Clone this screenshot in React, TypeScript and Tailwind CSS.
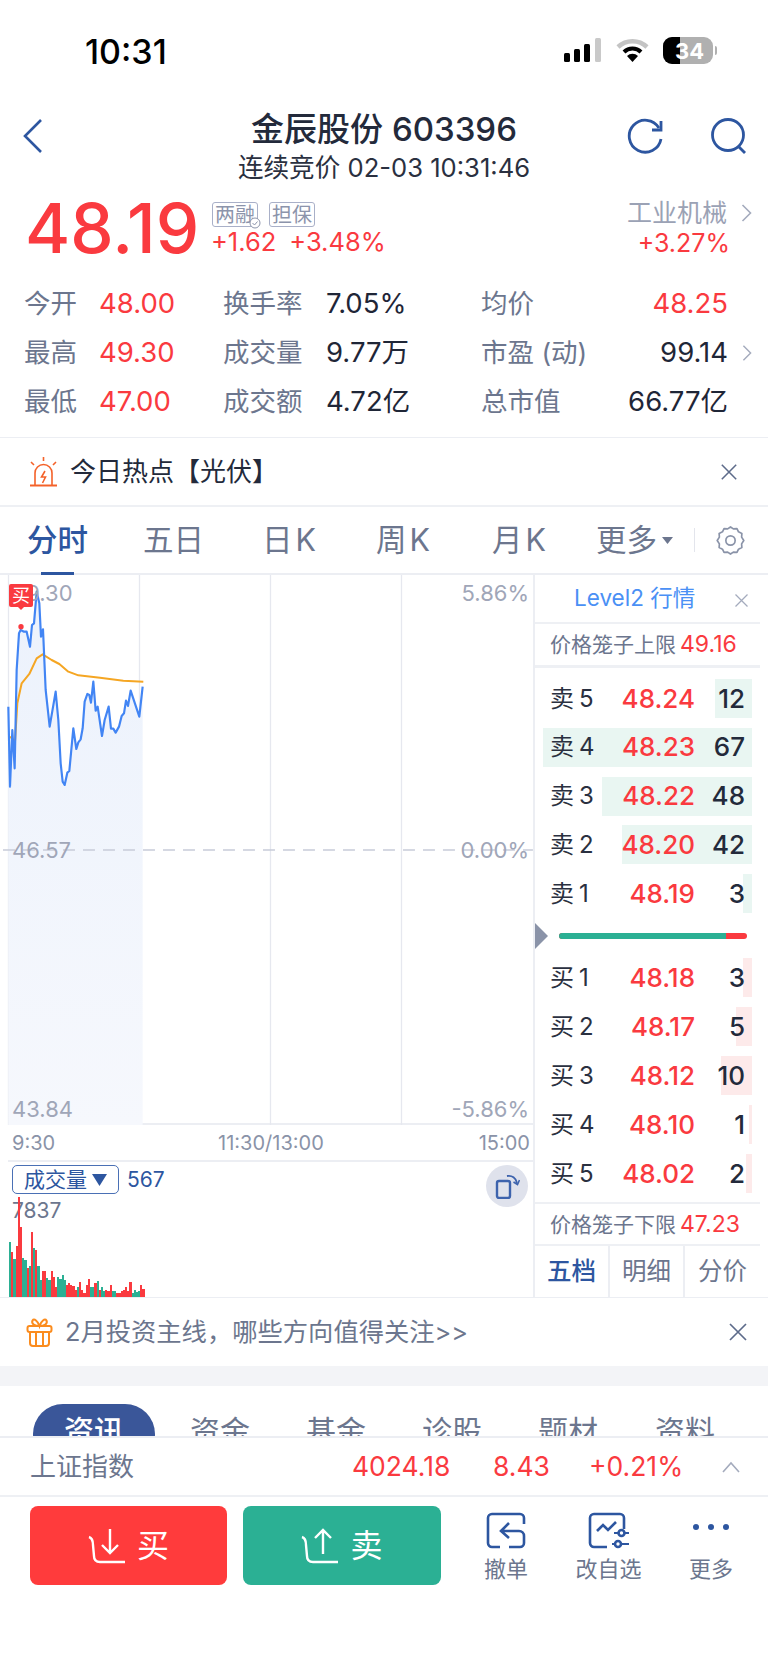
import React from 'react';

const FONT = '"Inter", "Noto Sans CJK SC", sans-serif';

const BLUE_PTS = '25,410 30,650 37,480 44,595 50,300 57,190 62,180 72,185 80,185 90,230 96,165 102,160 110,65 118,100 123,200 129,178 137,360 149,470 167,365 175,450 182,580 188,635 194,645 202,608 208,603 220,475 229,537 235,517 242,508 248,475 254,395 262,372 268,375 273,398 280,335 287,422 293,410 306,498 314,450 326,410 333,476 340,476 347,488 357,470 365,438 372,430 378,392 384,408 392,362 418,440 428,350';
const ORANGE_PTS = '30,500 45,515 52,400 65,340 88,312 110,265 128,253 155,270 178,282 205,305 235,316 300,323 370,332 430,335';

const VOL: [number, number][] = [[55,0],[45,1],[38,0],[51,1],[100,1],[70,1],[39,0],[37,0],[29,1],[31,0],[65,1],[49,0],[47,1],[31,0],[17,0],[26,1],[26,1],[19,0],[17,0],[26,1],[20,1],[10,1],[20,0],[18,0],[22,0],[17,0],[12,1],[14,1],[12,1],[11,1],[7,1],[10,0],[15,1],[7,1],[4,1],[12,1],[18,1],[10,0],[10,0],[14,1],[16,0],[7,1],[10,0],[6,0],[7,1],[6,1],[12,1],[6,0],[6,0],[4,1],[4,1],[6,1],[7,1],[10,1],[6,1],[15,1],[4,0],[7,0],[5,0],[6,0],[12,1],[8,1]];

const SELL = [
  ['卖', '5', '48.24', '12', 37],
  ['卖', '4', '48.23', '67', 209],
  ['卖', '3', '48.22', '48', 150],
  ['卖', '2', '48.20', '42', 130],
  ['卖', '1', '48.19', '3', 9],
] as const;
const BUY = [
  ['买', '1', '48.18', '3', 9],
  ['买', '2', '48.17', '5', 16],
  ['买', '3', '48.12', '10', 31],
  ['买', '4', '48.10', '1', 3],
  ['买', '5', '48.02', '2', 6],
] as const;

function Chevron({ className }: { className: string }) {
  return (
    <svg className={className} width="11" height="20" viewBox="0 0 11 20" fill="none" stroke="#a4abbd" strokeWidth="1.6">
      <path d="M1.5 2 L9.5 10 L1.5 18" />
    </svg>
  );
}

function Close({ size, color }: { size: number; color: string }) {
  return (
    <svg width={size} height={size} viewBox="0 0 20 20" fill="none" stroke={color} strokeWidth="1.7">
      <path d="M2 2 L18 18 M18 2 L2 18" />
    </svg>
  );
}

function Stat({ label, value, red, w, vw }: { label: string; value: string; red?: boolean; w: string; vw?: string }) {
  return (
    <div className={`flex items-center ${w}`}>
      <span className={`text-[26.5px] leading-none whitespace-nowrap text-[#6c768e] ${vw}`}>{label}</span>
      <span className={`text-[27.5px] leading-none whitespace-nowrap ${red ? 'text-[#fa3a3f]' : 'text-[#1f2637]'}`}>{value}</span>
    </div>
  );
}

function BookRow({ row, buy }: { row: readonly [string, string, string, string, number]; buy?: boolean }) {
  return (
    <div className="relative flex h-[39px] items-center pl-[15px] pr-[15px]">
      <div
        className={`absolute right-[8px] top-0 h-full ${buy ? 'bg-[#fdeaea]' : 'bg-[#e9f6f2]'}`}
        style={{ width: row[4] }}
      />
      <span className="relative flex w-[60px] items-center text-[24px] leading-none text-[#2a3040]">
        {row[0]}
        <span className="ml-[5px]">{row[1]}</span>
      </span>
      <span className="relative w-[85px] text-right text-[26px] font-medium leading-none text-[#fa3a3f]">{row[2]}</span>
      <span className="relative flex-1 text-right text-[26px] font-medium leading-none text-[#232a3b]">{row[3]}</span>
    </div>
  );
}

function ActionIcon({ label, children, w }: { label: string; children: React.ReactNode; w: string }) {
  return (
    <div className={`flex flex-col items-center ${w}`}>
      <div className="mt-[3px] flex h-[42px] items-center justify-center">{children}</div>
      <span className="mt-[4px] text-[22px] leading-[28px] text-[#6c768e]">{label}</span>
    </div>
  );
}

export default function App() {
  return (
    <div className="h-[1663px] w-[768px] overflow-hidden bg-white" style={{ fontFamily: FONT }}>
      {/* status bar */}
      <div className="flex h-[104px] items-start justify-between pl-[85px] pr-[51px] pt-[33px]">
        <span className="text-[34px] font-medium leading-[38px] text-black">10:31</span>
        <div className="flex items-center pt-[4px]">
          <svg width="38" height="25" viewBox="0 0 38 25">
            <rect x="0" y="15" width="6" height="9" rx="1.5" fill="#000" />
            <rect x="10" y="11" width="6" height="13" rx="1.5" fill="#000" />
            <rect x="20" y="6" width="6" height="18" rx="1.5" fill="#000" />
            <rect x="31" y="0" width="6" height="24" rx="1.5" fill="#c9c9c9" />
          </svg>
          <svg className="ml-[14px]" width="33" height="25" viewBox="0 0 33 25" fill="none">
            <path d="M2 9 A21 21 0 0 1 31 9" stroke="#c4c4c4" strokeWidth="4.5" />
            <path d="M8 14 A12 12 0 0 1 25 14" stroke="#000" strokeWidth="4" />
            <path d="M16.5 24 L11 18 A8 8 0 0 1 22 18 Z" fill="#000" />
          </svg>
          <div className="ml-[14px] flex h-[27px] w-[50px] overflow-hidden rounded-[9px] bg-[#b0b0b0]">
            <div className="h-full w-[17px] bg-black" />
          </div>
          <span className="-ml-[45px] mr-[2px] w-[43px] text-center text-[22px] font-bold leading-none text-white">34</span>
          <div className="ml-[2px] h-[9px] w-[2px] rounded-r bg-[#b0b0b0]" />
        </div>
      </div>

      {/* header */}
      <div className="flex h-[76px] items-start pl-[23px] pr-[21px]">
        <svg className="mt-[14px]" width="20" height="36" viewBox="0 0 20 36" fill="none" stroke="#2d56a0" strokeWidth="2.6">
          <path d="M18 2 L2 18 L18 34" />
        </svg>
        <div className="flex flex-1 flex-col items-center pl-[98px]">
          <div className="whitespace-nowrap text-[33px] font-medium leading-[50px] text-[#232a3b]">金辰股份 603396</div>
          <div className="-mt-[1px] whitespace-nowrap text-[25.6px] leading-[30px] text-[#2a3040]">连续竞价 02-03 10:31:46</div>
        </div>
        <svg className="mt-[13px]" width="37" height="37" viewBox="0 0 37 37" fill="none" stroke="#2d56a0" strokeWidth="2.8">
          <path d="M32 11 A16 16 0 1 0 34 22" />
          <path d="M34 4 L34 13 L25 13" />
        </svg>
        <svg className="ml-[46px] mt-[13px]" width="37" height="37" viewBox="0 0 37 37" fill="none" stroke="#2d56a0" strokeWidth="2.8">
          <circle cx="18" cy="18" r="15.5" />
          <path d="M28 29 L35 36" />
        </svg>
      </div>

      {/* price */}
      <div className="flex h-[86px] items-start pl-[25px] pr-[16px] pt-[22px]">
        <span className="w-[186px] text-[69px] font-medium leading-[52px] text-[#fa3a3f]">48.19</span>
        <div className="flex flex-col">
          <div className="ml-[1px] flex gap-[11px]">
            <div className="relative flex h-[25px] w-[46px] items-center justify-center rounded-[3px] border border-[#a9b0c8] text-[20px] leading-none text-[#8c94ab]">
              两融
              <svg className="absolute -bottom-[3px] -right-[4px]" width="12" height="12" viewBox="0 0 12 12" fill="#fff" stroke="#8c94ab">
                <circle cx="6" cy="6" r="5" />
                <path d="M3.5 6 L5.5 8 L8.5 4.5" fill="none" />
              </svg>
            </div>
            <div className="flex h-[25px] w-[46px] items-center justify-center rounded-[3px] border border-[#a9b0c8] text-[20px] leading-none text-[#8c94ab]">
              担保
            </div>
          </div>
          <div className="flex items-center gap-[13px] text-[25.5px] leading-[30px] text-[#fa3a3f]">
            <span>+1.62</span>
            <span>+3.48%</span>
          </div>
        </div>
        <div className="-mt-[2px] ml-auto flex flex-col items-end">
          <div className="flex items-center">
            <span className="text-[25px] leading-[26px] text-[#9ba2b5]">工业机械</span>
            <Chevron className="ml-[14px]" />
          </div>
          <span className="mr-[22px] mt-[2px] text-[25px] leading-[30px] text-[#fa3a3f]">+3.27%</span>
        </div>
      </div>

      {/* stats */}
      <div className="flex h-[172px] flex-col border-b border-[#eceef3] pl-[24px] pt-[13px]">
        <div className="flex h-[49px] items-center">
          <Stat label="今开" value="48.00" red w="w-[199px]" vw="w-[75px]" />
          <Stat label="换手率" value="7.05%" w="w-[258px]" vw="w-[103px]" />
          <span className="w-[100px] whitespace-nowrap text-[26.5px] leading-none text-[#6c768e]">均价</span>
          <span className="w-[147px] text-right text-[27.5px] leading-none text-[#fa3a3f]">48.25</span>
        </div>
        <div className="flex h-[49px] items-center">
          <Stat label="最高" value="49.30" red w="w-[199px]" vw="w-[75px]" />
          <Stat label="成交量" value="9.77万" w="w-[258px]" vw="w-[103px]" />
          <span className="w-[100px] whitespace-nowrap text-[26.5px] leading-none text-[#6c768e]">市盈 (动)</span>
          <span className="w-[147px] text-right text-[27.5px] leading-none text-[#1f2637]">99.14</span>
          <Chevron className="ml-[14px] h-[18px] w-[10px]" />
        </div>
        <div className="flex h-[49px] items-center">
          <Stat label="最低" value="47.00" red w="w-[199px]" vw="w-[75px]" />
          <Stat label="成交额" value="4.72亿" w="w-[258px]" vw="w-[103px]" />
          <span className="w-[100px] whitespace-nowrap text-[26.5px] leading-none text-[#6c768e]">总市值</span>
          <span className="w-[147px] whitespace-nowrap text-right text-[27.5px] leading-none text-[#1f2637]">66.77亿</span>
        </div>
      </div>

      {/* hot */}
      <div className="flex h-[69px] items-center border-b-2 border-[#eef0f4] pl-[29px] pr-[30px]">
        <svg width="29" height="31" viewBox="0 0 29 31" fill="none" stroke="#f4622a" strokeWidth="1.6">
          <path d="M6 29 L6 17 A8.5 8.5 0 0 1 23 17 L23 29" />
          <path d="M1 29.5 L28 29.5" strokeWidth="2" />
          <path d="M14.5 1 L14.5 5 M2 6 L5 9 M27 6 L24 9" />
          <path d="M16 15 L12.5 21 L16.5 21 L13.5 27" />
        </svg>
        <span className="ml-[12px] text-[26px] leading-none text-[#232a3b]">今日热点【光伏】</span>
        <div className="ml-auto">
          <Close size={18} color="#5d6b8a" />
        </div>
      </div>

      {/* period tabs */}
      <div className="relative flex h-[68px] items-center whitespace-nowrap border-b-2 border-[#eceef3] text-[30.5px] leading-none text-[#6c768e]">
        <span className="ml-[27px] w-[61px] font-medium text-[#2d56a0]">分时</span>
        <span className="ml-[55px] w-[61px]">五日</span>
        <span className="ml-[58px] w-[54px]">日<span className="ml-[3px]">K</span></span>
        <span className="ml-[60px] w-[54px]">周<span className="ml-[3px]">K</span></span>
        <span className="ml-[62px] w-[54px]">月<span className="ml-[3px]">K</span></span>
        <span className="ml-[50px] w-[61px]">更多</span>
        <svg className="ml-[5px]" width="11" height="7" viewBox="0 0 11 7" fill="#6c768e">
          <path d="M0 0 H11 L5.5 7 Z" />
        </svg>
        <div className="ml-[21px] h-[24px] w-px bg-[#e3e5ec]" />
        <svg className="ml-[20px]" width="31" height="31" viewBox="0 0 24 24" fill="none" stroke="#8a93a8" strokeWidth="1.3" strokeLinejoin="round">
          <path d="M12 1.5 L14.2 3 L17 2.8 L18.2 5.3 L20.8 6.5 L20.6 9.4 L22.3 12 L20.6 14.6 L20.8 17.5 L18.2 18.7 L17 21.2 L14.2 21 L12 22.5 L9.8 21 L7 21.2 L5.8 18.7 L3.2 17.5 L3.4 14.6 L1.7 12 L3.4 9.4 L3.2 6.5 L5.8 5.3 L7 2.8 L9.8 3 Z" />
          <circle cx="12" cy="12" r="3.6" />
        </svg>
        <div className="absolute bottom-[-2px] left-[41px] h-[3px] w-[33px] bg-[#2d56a0]" />
      </div>

      {/* chart + book */}
      <div className="flex h-[723px] border-b border-[#eceef3] pr-[8px]">
        <div className="flex w-[533px] flex-col pl-[8px]">
          <div className="relative h-[550px] border-b-2 border-[#eceef3] text-[22px] leading-none text-[#a0a6b8]">
            <svg className="absolute left-[-8px] top-0" width="533" height="550" viewBox="0 0 533 550" fill="none">
              <defs>
                <linearGradient id="area" x1="0" y1="0" x2="0" y2="1">
                  <stop offset="0" stopColor="#ecf2fc" />
                  <stop offset="1" stopColor="#f6f8fd" />
                </linearGradient>
              </defs>
              <g stroke="#e6e8ef" strokeWidth="1.3">
                <path d="M8.5 0 V550 M139.5 0 V550 M270.5 0 V550 M401.5 0 V550" />
              </g>
              <g transform="translate(0,-5) scale(0.3333)">
                <polygon points={`${BLUE_PTS} 428,1665 25,1665`} fill="url(#area)" />
                <path d="M 9 840 H 1599" stroke="#c8ccd9" strokeWidth="4" strokeDasharray="36 24" />
                <polyline points={ORANGE_PTS} stroke="#f5a623" strokeWidth="6" strokeLinejoin="round" />
                <polyline points={BLUE_PTS} stroke="#4285f4" strokeWidth="6.5" strokeLinejoin="round" />
                <circle cx="63" cy="170" r="8" fill="#fa3a3f" />
              </g>
            </svg>
            <span className="absolute left-[4px] top-[7px]">49.30</span>
            <span className="absolute right-[4px] top-[7px]">5.86%</span>
            <span className="absolute left-[4px] top-[264px]">46.57</span>
            <span className="absolute right-[4px] top-[264px]">0.00%</span>
            <span className="absolute bottom-[3px] left-[4px]">43.84</span>
            <span className="absolute bottom-[3px] right-[4px]">-5.86%</span>
            <div className="absolute left-[1px] top-[9px] flex h-[23px] w-[24px] items-center justify-center rounded-[2px] bg-[#fa3a3f] text-[18px] leading-none text-white">
              买
            </div>
            <div className="absolute left-[10px] top-[32px] h-0 w-0 border-x-[3px] border-t-[3px] border-x-transparent border-t-[#fa3a3f]" />
          </div>
          <div className="flex h-[37px] items-center justify-between border-b-2 border-[#eceef3] pl-[4px] pr-[3px] text-[20px] leading-none text-[#8a93a8]">
            <span>9:30</span>
            <span className="ml-[8px]">11:30/13:00</span>
            <span>15:00</span>
          </div>
          <div className="relative flex-1 overflow-hidden">
            <div className="ml-[4px] mt-[3px] flex items-center">
              <div className="flex h-[29px] w-[107px] items-center justify-center gap-[5px] rounded-[5px] border border-[#4a70b5] text-[21px] leading-none text-[#2d56a0]">
                成交量
                <svg width="15" height="12" viewBox="0 0 15 12" fill="#2d56a0">
                  <path d="M0 0 H15 L7.5 12 Z" />
                </svg>
              </div>
              <span className="ml-[8px] text-[21px] leading-none text-[#2d56a0]">567</span>
            </div>
            <div className="ml-[4px] mt-[5px] text-[21px] leading-[24px] text-[#6c768e]">7837</div>
            <div className="absolute bottom-0 left-[1px] flex items-end">
              {VOL.map((b, i) => (
                <div
                  key={i}
                  className={`w-[2.2px] ${b[1] ? 'bg-[#fa3a3f]' : 'bg-[#2bb094]'}`}
                  style={{ height: b[0] }}
                />
              ))}
            </div>
            <div className="absolute right-[5px] top-[3px] flex h-[42px] w-[42px] items-center justify-center rounded-full bg-[#dfe2ec]">
              <svg width="26" height="26" viewBox="0 0 26 26" fill="none" stroke="#3d63ad" strokeWidth="2.4">
                <rect x="3" y="8" width="13" height="17" rx="2" />
                <path d="M13 3 C18 2 22 5 23 10" strokeWidth="1.8" />
                <path d="M19.5 9 L23.5 11.5 L25.5 7" strokeWidth="1.6" />
              </svg>
            </div>
          </div>
        </div>

        <div className="flex flex-1 flex-col border-l-2 border-[#eceef3]">
          <div className="relative flex h-[49px] items-center border-b-2 border-[#eef0f4] pl-[39px] text-[22.5px] leading-none text-[#4a90f5]">
            Level2 行情
            <div className="absolute right-[11px] top-[18px]">
              <Close size={15} color="#a4abbd" />
            </div>
          </div>
          <div className="flex h-[44px] items-center border-b-[3px] border-[#eef0f4] pl-[15px] text-[21px] leading-none text-[#6c768e]">
            价格笼子上限<span className="ml-[4px] text-[23px] text-[#fa3a3f]">49.16</span>
          </div>
          <div className="flex flex-col gap-[9.75px] pt-[11px]">
            {SELL.map((r) => (
              <BookRow key={r[0] + r[1]} row={r} />
            ))}
          </div>
          <div className="flex h-[45px] items-center">
            <svg width="13" height="26" viewBox="0 0 13 26" fill="#8a93a8">
              <path d="M0 0 L13 13 L0 26 Z" />
            </svg>
            <div className="ml-[11px] flex h-[6px] w-[188px] overflow-hidden rounded-full bg-[#fa3a3f]">
              <div className="h-full w-[167px] bg-[#2bb094]" />
            </div>
          </div>
          <div className="flex flex-col gap-[10px]">
            {BUY.map((r) => (
              <BookRow key={r[0] + r[1]} row={r} buy />
            ))}
          </div>
          <div className="mt-[9px] flex h-[44px] items-center border-y-2 border-[#eef0f4] pl-[15px] text-[21px] leading-none text-[#6c768e]">
            价格笼子下限<span className="ml-[4px] text-[23px] text-[#fa3a3f]">47.23</span>
          </div>
          <div className="flex flex-1 text-[24.5px] leading-none text-[#6c768e]">
            <div className="flex w-[75px] items-center justify-center border-r-2 border-[#eceef3] font-medium text-[#2d56a0]">五档</div>
            <div className="flex w-[75px] items-center justify-center border-r-2 border-[#eceef3]">明细</div>
            <div className="flex flex-1 items-center justify-center">分价</div>
          </div>
        </div>
      </div>

      {/* banner */}
      <div className="flex h-[68px] items-center pl-[26px] pr-[20px]">
        <svg width="27" height="29" viewBox="0 0 27 29" fill="none" stroke="#fb8c1e" strokeWidth="2">
          <rect x="1.5" y="8" width="24" height="6" rx="2" />
          <path d="M4 14 V25 A3 3 0 0 0 7 28 H20 A3 3 0 0 0 23 25 V14" />
          <path d="M10 14 V28 M17 14 V28" />
          <path d="M13.5 8 C9 8 5 6 6.5 2.5 C8 0 12 3 13.5 8 C15 3 19 0 20.5 2.5 C22 6 18 8 13.5 8 Z" />
        </svg>
        <span className="ml-[12px] text-[25.3px] leading-none text-[#6c768e]">2月投资主线，哪些方向值得关注&gt;&gt;</span>
        <div className="ml-auto">
          <Close size={20} color="#5d6b8a" />
        </div>
      </div>
      <div className="h-[20px] bg-[#f3f4f7]" />

      {/* clipped tabs */}
      <div className="relative flex h-[52px] items-start overflow-hidden border-b-2 border-[#eceef3] pt-[18px]">
        <div className="ml-[33px] flex h-[60px] w-[122px] items-start justify-center rounded-[30px] bg-[#3a5699] pt-[7px] text-[30px] font-medium leading-[40px] text-white">资讯</div>
        <div className="mt-[7px] flex text-[30px] leading-[40px] text-[#6c768e]">
          <span className="ml-[35px] w-[60px]">资金</span>
          <span className="ml-[56px] w-[60px]">基金</span>
          <span className="ml-[56px] w-[60px]">诊股</span>
          <span className="ml-[56px] w-[60px]">题材</span>
          <span className="ml-[57px] w-[60px]">资料</span>
        </div>
      </div>

      {/* index */}
      <div className="flex h-[59px] items-center border-b-2 border-[#eef0f4] pl-[30px] leading-none">
        <span className="w-[322px] text-[26px] text-[#6c768e]">上证指数</span>
        <span className="w-[141px] text-[26.5px] text-[#fa3a3f]">4024.18</span>
        <span className="w-[96px] text-[26.5px] text-[#fa3a3f]">8.43</span>
        <span className="w-[133px] text-[26.5px] text-[#fa3a3f]">+0.21%</span>
        <svg width="18" height="12" viewBox="0 0 18 12" fill="none" stroke="#a4abbd" strokeWidth="1.6">
          <path d="M1 11 L9 2 L17 11" />
        </svg>
      </div>

      {/* actions */}
      <div className="flex items-start pl-[30px] pt-[9px]">
        <div className="flex h-[79px] w-[197px] items-center justify-center gap-[11px] rounded-[8px] bg-[#ff3b3c] text-[32px] leading-none text-white">
          <svg width="38" height="36" viewBox="0 0 38 36" fill="none" stroke="#fff" strokeWidth="2.4">
            <path d="M1 9 C4 10 5 13 5 17 L6 28 C6 32 8 34 12 34 L37 34" />
            <path d="M22 1 V25 M14 17 L22 25 L30 17" />
          </svg>
          买
        </div>
        <div className="ml-[16px] flex h-[79px] w-[198px] items-center justify-center gap-[11px] rounded-[8px] bg-[#2bb094] text-[32px] leading-none text-white">
          <svg width="38" height="36" viewBox="0 0 38 36" fill="none" stroke="#fff" strokeWidth="2.4">
            <path d="M1 9 C4 10 5 13 5 17 L6 28 C6 32 8 34 12 34 L37 34" />
            <path d="M22 26 V2 M14 10 L22 2 L30 10" />
          </svg>
          卖
        </div>
        <div className="ml-[15px] flex flex-1">
          <ActionIcon label="撤单" w="w-[100px]">
            <svg width="40" height="37" viewBox="0 0 40 37" fill="none" stroke="#2d56a0" strokeWidth="2.6">
              <path d="M14 35 H6 A4 4 0 0 1 2 31 V6 A4 4 0 0 1 6 2 H34 A4 4 0 0 1 38 6 V12" />
              <path d="M23 11 L15 19 L23 26 M15 19 H33 A5 5 0 0 1 38 24 V31 A4 4 0 0 1 34 35 H23" />
            </svg>
          </ActionIcon>
          <ActionIcon label="改自选" w="w-[105px]">
            <svg width="42" height="37" viewBox="0 0 42 37" fill="none" stroke="#2d56a0" strokeWidth="2.6">
              <path d="M19 35 H6 A4 4 0 0 1 2 31 V6 A4 4 0 0 1 6 2 H32 A4 4 0 0 1 36 6 V17" />
              <path d="M9 19 L15 13 L20 18 L28 10" />
              <path d="M26 21 H30 M37 21 H41 M24 32 H27 M33 32 H41" strokeWidth="2.2" />
              <circle cx="33.5" cy="21" r="3" />
              <circle cx="30" cy="32" r="3" />
            </svg>
          </ActionIcon>
          <ActionIcon label="更多" w="w-[100px]">
            <svg width="38" height="8" viewBox="0 0 38 8" fill="#2d56a0" className="mb-[6px]">
              <circle cx="4" cy="4" r="3" />
              <circle cx="19" cy="4" r="3" />
              <circle cx="34" cy="4" r="3" />
            </svg>
          </ActionIcon>
        </div>
      </div>
    </div>
  );
}
